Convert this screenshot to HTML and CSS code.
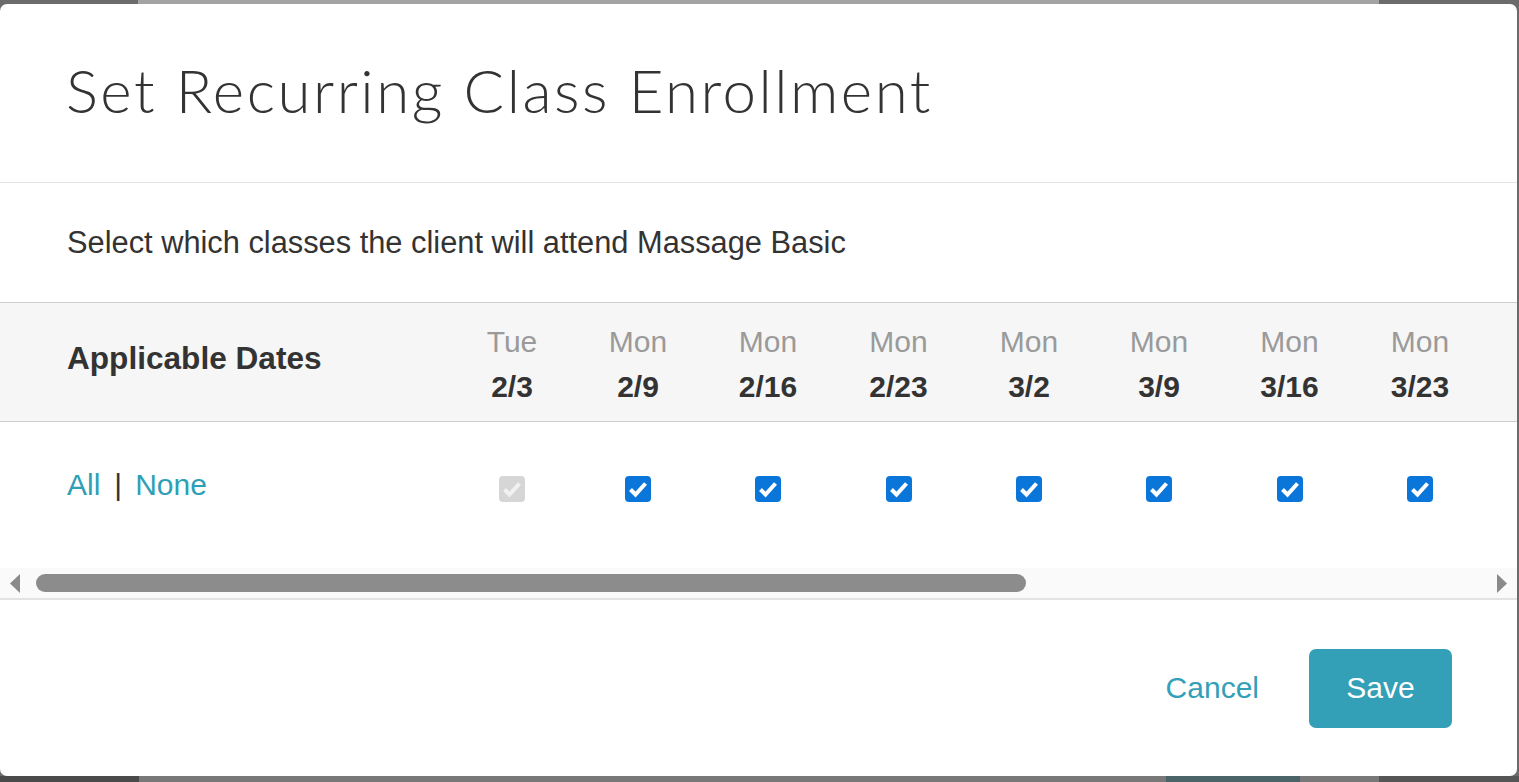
FILE: index.html
```html
<!DOCTYPE html>
<html lang="en">
<head>
<meta charset="utf-8">
<title>Set Recurring Class Enrollment</title>
<link rel="stylesheet" href="styles.css">
</head>
<body>
<div class="screen">
  <div class="page-strip page-top">
    <span class="seg seg-a"></span>
    <span class="seg seg-b"></span>
    <span class="seg seg-c"></span>
  </div>
  <div class="stage">
    <div class="modal" role="dialog" aria-labelledby="modal-title">
      <header class="modal-header">
        <h1 class="modal-title" id="modal-title">Set Recurring Class Enrollment</h1>
      </header>
      <div class="modal-intro">
        <p>Select which classes the client will attend Massage Basic</p>
      </div>
      <div class="schedule">
        <div class="schedule-row schedule-head">
          <div class="cell cell-label">Applicable Dates</div>
          <div class="cell cell-date"><span class="dow">Tue</span><span class="day">2/3</span></div>
          <div class="cell cell-date"><span class="dow">Mon</span><span class="day">2/9</span></div>
          <div class="cell cell-date"><span class="dow">Mon</span><span class="day">2/16</span></div>
          <div class="cell cell-date"><span class="dow">Mon</span><span class="day">2/23</span></div>
          <div class="cell cell-date"><span class="dow">Mon</span><span class="day">3/2</span></div>
          <div class="cell cell-date"><span class="dow">Mon</span><span class="day">3/9</span></div>
          <div class="cell cell-date"><span class="dow">Mon</span><span class="day">3/16</span></div>
          <div class="cell cell-date"><span class="dow">Mon</span><span class="day">3/23</span></div>
        </div>
        <div class="schedule-row schedule-body">
          <div class="cell cell-label cell-links">
            <a href="#" class="link">All</a><span class="sep">|</span><a href="#" class="link">None</a>
          </div>
          <div class="cell cell-check"><span class="check is-disabled" role="checkbox" aria-checked="true" aria-disabled="true"><svg viewBox="0 0 26 26" width="26" height="26"><polyline points="5.5,13.5 10.5,18.5 20.5,7.5"/></svg></span></div>
          <div class="cell cell-check"><span class="check" role="checkbox" aria-checked="true"><svg viewBox="0 0 26 26" width="26" height="26"><polyline points="5.5,13.5 10.5,18.5 20.5,7.5"/></svg></span></div>
          <div class="cell cell-check"><span class="check" role="checkbox" aria-checked="true"><svg viewBox="0 0 26 26" width="26" height="26"><polyline points="5.5,13.5 10.5,18.5 20.5,7.5"/></svg></span></div>
          <div class="cell cell-check"><span class="check" role="checkbox" aria-checked="true"><svg viewBox="0 0 26 26" width="26" height="26"><polyline points="5.5,13.5 10.5,18.5 20.5,7.5"/></svg></span></div>
          <div class="cell cell-check"><span class="check" role="checkbox" aria-checked="true"><svg viewBox="0 0 26 26" width="26" height="26"><polyline points="5.5,13.5 10.5,18.5 20.5,7.5"/></svg></span></div>
          <div class="cell cell-check"><span class="check" role="checkbox" aria-checked="true"><svg viewBox="0 0 26 26" width="26" height="26"><polyline points="5.5,13.5 10.5,18.5 20.5,7.5"/></svg></span></div>
          <div class="cell cell-check"><span class="check" role="checkbox" aria-checked="true"><svg viewBox="0 0 26 26" width="26" height="26"><polyline points="5.5,13.5 10.5,18.5 20.5,7.5"/></svg></span></div>
          <div class="cell cell-check"><span class="check" role="checkbox" aria-checked="true"><svg viewBox="0 0 26 26" width="26" height="26"><polyline points="5.5,13.5 10.5,18.5 20.5,7.5"/></svg></span></div>
        </div>
      </div>
      <div class="hscroll" aria-hidden="true">
        <svg class="hscroll-arrow" viewBox="0 0 10 19" width="10" height="19"><polygon points="0,9.5 10,0 10,19"/></svg>
        <span class="hscroll-thumb"></span>
        <span class="hscroll-space"></span>
        <svg class="hscroll-arrow" viewBox="0 0 10 19" width="10" height="19"><polygon points="0,0 10,9.5 0,19"/></svg>
      </div>
      <footer class="modal-footer">
        <a href="#" class="btn-cancel">Cancel</a>
        <button type="button" class="btn-save">Save</button>
      </footer>
    </div>
    <div class="page-right"></div>
  </div>
  <div class="page-strip page-bottom">
    <span class="seg seg-d"></span>
    <span class="seg seg-e"></span>
    <span class="seg seg-f"></span>
    <span class="seg seg-g"></span>
    <span class="seg seg-h"></span>
  </div>
</div>
</body>
</html>
```

FILE: styles.css
```css
html, body {
  margin: 0;
  padding: 0;
}

body {
  font-family: "Liberation Sans", Arial, sans-serif;
  color: #333;
  background: #787878;
}

.screen {
  width: 1519px;
  height: 782px;
  display: flex;
  flex-direction: column;
  overflow: hidden;
  background: #787878;
}

/* ---------- page behind the overlay ---------- */
.page-strip {
  display: flex;
  flex: none;
}

.page-top {
  height: 4px;
}

.page-bottom {
  height: 6px;
}

.seg {
  display: block;
  height: 100%;
}

.seg-a { width: 138px; background: #6b6b6b; }
.seg-b { width: 1241px; background: #a3a3a3; }
.seg-c { flex: 1; background: #6b6b6b; }

.seg-d { width: 139px; background: #4a4a4a; }
.seg-e { width: 1027px; background: #787878; }
.seg-f { width: 134px; background: #4a6468; }
.seg-g { width: 79px; background: #787878; }
.seg-h { flex: 1; background: #555; }

.stage {
  height: 772px;
  display: flex;
  flex: none;
  background: #6b6b6b;
}

.page-right {
  flex: 1;
  background: #6b6b6b;
}

/* ---------- modal ---------- */
.modal {
  width: 1517px;
  height: 772px;
  background: #fff;
  border-radius: 7px;
  display: flex;
  flex-direction: column;
  overflow: hidden;
}

.modal-header {
  box-sizing: border-box;
  height: 179px;
  padding: 50px 67px 0 66px;
  border-bottom: 1px solid #e5e5e5;
  flex: none;
}

.modal-title {
  margin: 0;
  font-family: Lato, "Open Sans", sans-serif;
  font-weight: 300;
  font-size: 60px;
  line-height: 72px;
  color: #333;
  letter-spacing: 2.5px;
  white-space: nowrap;
}

.modal-intro {
  height: 119px;
  display: flex;
  align-items: center;
  padding: 0 67px;
  flex: none;
}

.modal-intro p {
  margin: 0;
  font-size: 30.8px;
  color: #333;
}

/* ---------- schedule grid ---------- */
.schedule {
  overflow: hidden;
  flex: none;
}

.schedule-row {
  display: grid;
  grid-template-columns: 451px 122px 130px 130px 131px 130px 130px 131px 130px;
  width: max-content;
  min-width: 100%;
}

.schedule-head {
  height: 118px;
  background: #f6f6f6;
  border-top: 1px solid #cdcdcd;
  border-bottom: 1px solid #cdcdcd;
}

.cell-label {
  padding-left: 67px;
  font-size: 30px;
}

.schedule-head .cell-label {
  align-self: center;
  font-weight: bold;
  font-size: 31.6px;
  color: #333;
  line-height: 34px;
  padding-bottom: 8px;
  white-space: nowrap;
}

.cell-date {
  display: flex;
  flex-direction: column;
  align-items: center;
  padding-top: 16px;
  font-size: 30px;
  line-height: 45px;
}

.dow {
  color: #9a9a9a;
}

.day {
  font-weight: bold;
  color: #333;
}

.schedule-body {
  height: 146px;
}

.cell-links {
  display: flex;
  align-items: flex-start;
  padding-top: 46px;
  line-height: 34px;
}

.link {
  color: #2f9fb6;
  text-decoration: none;
}

.sep {
  color: #333;
  margin: 0 13px 0 14px;
}

.cell-check {
  display: flex;
  justify-content: center;
  padding-top: 54px;
}

.check {
  display: block;
  width: 26px;
  height: 26px;
  border-radius: 4px;
  background: #0b76d9;
}

.check svg {
  display: block;
}

.check polyline {
  fill: none;
  stroke: #fff;
  stroke-width: 4;
  stroke-linecap: butt;
  stroke-linejoin: miter;
}

.check.is-disabled {
  background: #d6d6d6;
}

.check.is-disabled polyline {
  stroke: #f1f1f1;
}

/* ---------- horizontal scrollbar ---------- */
.hscroll {
  height: 30px;
  flex: none;
  display: flex;
  align-items: center;
  padding: 0 10px;
  background: #fafafa;
  border-bottom: 2px solid #e3e3e3;
}

.hscroll-arrow {
  display: block;
  fill: #8a8a8a;
  flex: none;
}

.hscroll-thumb {
  display: block;
  width: 990px;
  height: 18px;
  margin-left: 16px;
  border-radius: 9px;
  background: #8c8c8c;
  flex: none;
}

.hscroll-space {
  flex: 1;
}

/* ---------- footer ---------- */
.modal-footer {
  flex: 1;
  display: flex;
  align-items: center;
  justify-content: flex-end;
  gap: 50px;
  padding-right: 65px;
}

.btn-cancel {
  font-size: 30px;
  color: #33a0b7;
  text-decoration: none;
}

.btn-save {
  width: 143px;
  height: 79px;
  border: none;
  border-radius: 7px;
  background: #33a0b7;
  color: #fff;
  font-family: "Liberation Sans", Arial, sans-serif;
  font-size: 30px;
  padding: 0;
  cursor: pointer;
}
```
